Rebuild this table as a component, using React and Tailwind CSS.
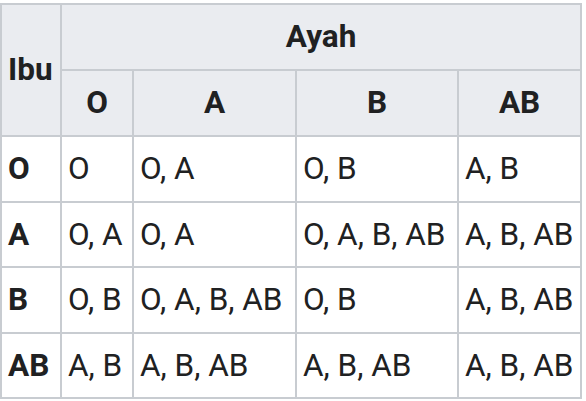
export default function App() {
  const rows = [
    ['O', 'O', 'O, A', 'O, B', 'A, B'],
    ['A', 'O, A', 'O, A', 'O, A, B, AB', 'A, B, AB'],
    ['B', 'O, B', 'O, A, B, AB', 'O, B', 'A, B, AB'],
    ['AB', 'A, B', 'A, B, AB', 'A, B, AB', 'A, B, AB'],
  ];
  const heights = ['h-[66px]', 'h-[65px]', 'h-[66px]', 'h-[65px]'];
  const cell = "border-2 border-[#c8ccd1] px-[6px] text-[31.5px] leading-[36px] whitespace-nowrap";

  return (
    <div className="w-[586px] h-[401px] bg-white pt-[3px] font-['Roboto',sans-serif] text-[#202122]">
      <table className="border-collapse border-2 border-[#c8ccd1] w-[582px] table-fixed text-[31.5px] text-[#202122]">
        <colgroup>
          <col className="w-[60px]" />
          <col className="w-[72px]" />
          <col className="w-[163px]" />
          <col className="w-[162px]" />
          <col className="w-[123px]" />
        </colgroup>
        <thead>
          <tr className="h-[66px] bg-[#eaecf0]">
            <th rowSpan={2} className={`${cell} text-left font-bold`}>Ibu</th>
            <th colSpan={4} className={`${cell} text-center font-bold`}>Ayah</th>
          </tr>
          <tr className="h-[66px] bg-[#eaecf0]">
            <th className={`${cell} text-center font-bold`}>O</th>
            <th className={`${cell} text-center font-bold`}>A</th>
            <th className={`${cell} text-center font-bold`}>B</th>
            <th className={`${cell} text-center font-bold`}>AB</th>
          </tr>
        </thead>
        <tbody>
          {rows.map((r, i) => (
            <tr key={i} className={heights[i]}>
              <th className={`${cell} text-left font-bold`}>{r[0]}</th>
              {r.slice(1).map((c, j) => (
                <td key={j} className={`${cell} font-normal`}>{c}</td>
              ))}
            </tr>
          ))}
        </tbody>
      </table>
    </div>
  );
}
